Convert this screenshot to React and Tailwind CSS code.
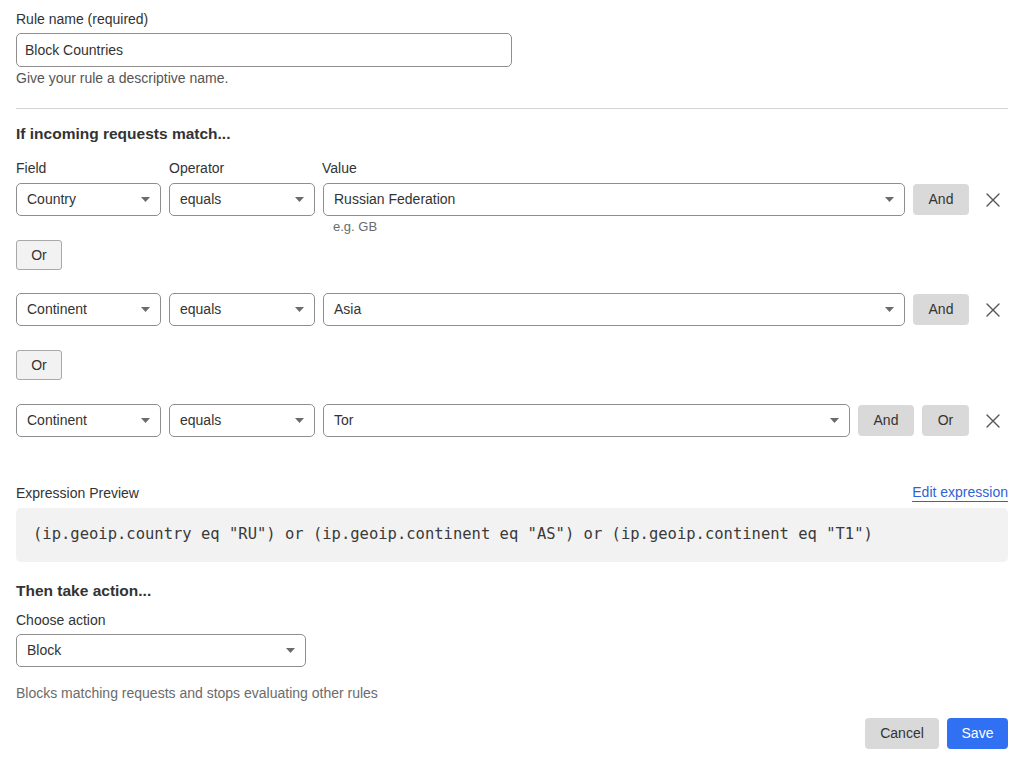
import React from "react";

const sans = { fontFamily: '"Liberation Sans", Arial, sans-serif' };

function Caret() {
  return (
    <svg width="9" height="5" viewBox="0 0 9 5" className="shrink-0">
      <path d="M0 0 L9 0 L4.5 5 Z" fill="#6b6b6b" />
    </svg>
  );
}

function Select({ value, className = "" }) {
  return (
    <div
      className={`h-[33px] flex items-center justify-between pl-[10px] pr-[10px] border border-[#8e8e8e] rounded-[5px] bg-white text-[14px] text-[#333] ${className}`}
    >
      <span>{value}</span>
      <Caret />
    </div>
  );
}

function GrayButton({ children, className = "" }) {
  return (
    <button
      className={`h-[31px] rounded-[4px] bg-[#d9d9d9] text-[14px] text-[#333] flex items-center justify-center ${className}`}
    >
      {children}
    </button>
  );
}

function CloseIcon() {
  return (
    <svg width="14" height="14" viewBox="0 0 14 14">
      <path d="M1 1 L13 13 M13 1 L1 13" stroke="#555" strokeWidth="1.4" strokeLinecap="round" />
    </svg>
  );
}

function OrDivider() {
  return (
    <button className="h-[30px] w-[46px] rounded-[3px] border border-[#a8a8a8] bg-[#f2f2f2] text-[14px] text-[#333] flex items-center justify-center">
      Or
    </button>
  );
}

function ConditionRow({ field, value, withOr, hint }) {
  return (
    <div>
      <div className="flex items-center">
        <Select value={field} className="w-[145px]" />
        <Select value="equals" className="w-[146px] ml-[8px]" />
        <Select value={value} className="flex-1 ml-[8px]" />
        <GrayButton className="w-[56px] ml-[8px]">And</GrayButton>
        {withOr && <GrayButton className="w-[47px] ml-[8px]">Or</GrayButton>}
        <div className="w-[39px] flex justify-center pl-[9px] pr-[1px]">
          <CloseIcon />
        </div>
      </div>
      {hint && (
        <div className="mt-[3px] ml-[317px] text-[13px] leading-4 text-[#6b6b6b]">{hint}</div>
      )}
    </div>
  );
}

export default function App() {
  return (
    <div className="bg-white w-[1024px] h-[767px] px-4 pt-[11px] text-[#333]" style={sans}>
      <div className="text-[14px] leading-4">Rule name (required)</div>
      <div className="mt-[6px] w-[496px] h-[34px] border border-[#8e8e8e] rounded-[5px] flex items-center pl-[8px] text-[14px]">
        Block Countries
      </div>
      <div className="mt-[3px] text-[14px] leading-4 text-[#555]">Give your rule a descriptive name.</div>

      <div className="mt-[22px] border-t border-[#d4d4d4]" />

      <div className="mt-[15px] text-[15.5px] leading-5 font-bold text-[#333]">If incoming requests match...</div>

      <div className="mt-[16px] flex text-[14px] leading-4">
        <div className="w-[153px]">Field</div>
        <div className="w-[153px]">Operator</div>
        <div>Value</div>
      </div>

      <div className="mt-[7px]">
        <ConditionRow field="Country" value="Russian Federation" hint="e.g. GB" />
      </div>
      <div className="mt-[5px]">
        <OrDivider />
      </div>
      <div className="mt-[23px]">
        <ConditionRow field="Continent" value="Asia" />
      </div>
      <div className="mt-[24px]">
        <OrDivider />
      </div>
      <div className="mt-[24px]">
        <ConditionRow field="Continent" value="Tor" withOr />
      </div>

      <div className="mt-[46px] flex items-end justify-between text-[14px] leading-4">
        <span>Expression Preview</span>
        <a className="text-[14px] text-[#2f62d6] border-b border-[#2f62d6] leading-[17px] translate-y-[1px]">Edit expression</a>
      </div>
      <div
        className="mt-[7px] h-[54px] rounded-[5px] bg-[#f2f2f2] flex items-center pl-[17px] text-[15.5px] text-[#3a3a3a]"
        style={{ fontFamily: '"DejaVu Sans Mono", "Liberation Mono", monospace' }}
      >
        (ip.geoip.country eq "RU") or (ip.geoip.continent eq "AS") or (ip.geoip.continent eq "T1")
      </div>

      <div className="mt-[19px] text-[15.5px] leading-5 font-bold">Then take action...</div>
      <div className="mt-[11px] text-[14px] leading-4">Choose action</div>
      <Select value="Block" className="mt-[6px] w-[290px]" />
      <div className="mt-[18px] text-[14px] leading-4 text-[#6b6b6b]">
        Blocks matching requests and stops evaluating other rules
      </div>

      <div className="mt-[17px] flex justify-end gap-[8px]">
        <GrayButton className="w-[74px]">Cancel</GrayButton>
        <button className="h-[31px] w-[61px] rounded-[4px] bg-[#3070f3] text-white text-[14px] flex items-center justify-center">
          Save
        </button>
      </div>
    </div>
  );
}
